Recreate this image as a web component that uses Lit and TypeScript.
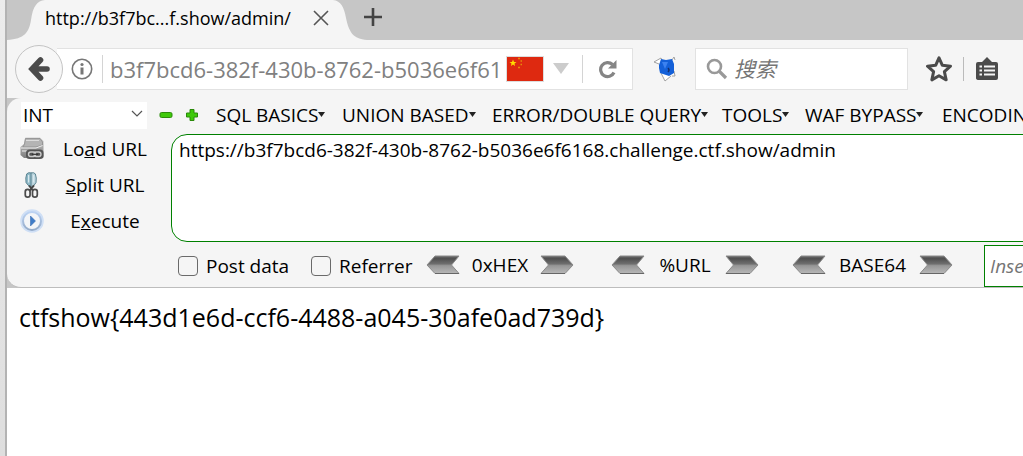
import { LitElement, html, css, svg } from "lit";
import { customElement } from "lit/decorators.js";

const MENUS = ["SQL BASICS", "UNION BASED", "ERROR/DOUBLE QUERY", "TOOLS", "WAF BYPASS", "ENCODING"];
const CODECS = ["0xHEX", "%URL", "BASE64"];

const starPoints = "12,1.8 15.1,8.6 22.6,9.4 17,14.5 18.6,22 12,18.2 5.4,22 7,14.5 1.4,9.4 8.9,8.6";

const diskIcon = html`<svg class="icon" viewBox="0 0 24 24" aria-hidden="true">
  <defs><linearGradient id="disk" x2="0" y2="1"><stop offset="0" stop-color="#d0d0d0" /><stop offset="1" stop-color="#7c7c7c" /></linearGradient></defs>
  <path d="M5 1 Q5 0.500 6 0.500 H20 L23.500 4 V20 Q23.500 21 22 21 H4 L0.500 18 V10 L4 7 Z" fill="url(#disk)" />
  <path d="M5.500 1.500 H20 L22.500 5 V8 L16 10 H3 L4.500 7 Z" fill="#b4b4b4" stroke="#8e8e8e" stroke-width=".8" />
  <path d="M6 3.500 H19" stroke="#dcdcdc" />
  <path d="M1 11 H16 L22.500 8.500 M2 14 H8" stroke="#efefef" fill="none" />
  <rect x="6" y="12.500" width="17.500" height="9.500" rx="3.500" fill="#555" />
  <rect x="8.500" y="15" width="7" height="4.500" rx="2.200" fill="none" stroke="#ccc" stroke-width="1.400" />
  <rect x="14" y="15" width="7" height="4.500" rx="2.200" fill="none" stroke="#ccc" stroke-width="1.400" />
  <path d="M12 17.300 H18" stroke="#333" stroke-width="1.200" />
</svg>`;

const scissorsIcon = html`<svg class="icon" viewBox="0 0 24 27" aria-hidden="true">
  <path d="M6.500 2 Q5 6 5.800 11 L10 16 H11.500 V1 Q8 0 6.500 2Z" fill="#8fb9c7" stroke="#56808e" />
  <path d="M15.500 2 Q17 6 16.200 11 L12.500 16 H11 V1 Q14 0 15.500 2Z" fill="#b9d3dc" stroke="#56808e" />
  <path d="M8.500 3 V11 M13.800 3 V11" stroke="#dcebf0" stroke-width="1.200" />
  <path d="M9 14 L13.500 20 M14 14 L9 20" stroke="#444" stroke-width="2" />
  <rect x="5" y="18" width="5" height="8" rx="2.500" fill="#f5f5f5" stroke="#4b4b4b" stroke-width="1.800" />
  <rect x="12.500" y="18" width="5" height="8" rx="2.500" fill="#f5f5f5" stroke="#4b4b4b" stroke-width="1.800" />
</svg>`;

const playIcon = html`<svg class="icon" viewBox="0 0 24 24" aria-hidden="true">
  <defs><linearGradient id="play" x2="0" y2="1"><stop offset="0" stop-color="#bcd3f3" /><stop offset="1" stop-color="#94abc9" /></linearGradient></defs>
  <circle cx="12" cy="12" r="11.800" fill="#cfdff5" />
  <circle cx="12" cy="12" r="9" fill="#f3f5f8" stroke="url(#play)" stroke-width="2" />
  <path d="M10.500 7 L15.500 12 L10.500 17Z" fill="#3f7cc8" stroke="#2d62a8" stroke-width=".5" />
</svg>`;

const arrowIcon = (dir: "left" | "right") => html`<svg class="arrow" viewBox="0 0 34 20" aria-hidden="true">
  <defs><linearGradient id="steel" x2="0" y2="1"><stop offset="0" stop-color="#6f6f6f" /><stop offset=".15" stop-color="#505050" /><stop offset=".45" stop-color="#6e6e6e" /><stop offset=".55" stop-color="#969696" /><stop offset="1" stop-color="#b8b8b8" /></linearGradient></defs>
  ${dir === "left"
    ? svg`<path d="M1 10 L9 1 H33 L25.500 10 L33 18.500 H9Z" fill="url(#steel)" stroke="#8a8a8a" /><path d="M9 18.500 H33" stroke="#666" />`
    : svg`<path d="M33 10 L25 1 H1 L8.500 10 L1 18.500 H25Z" fill="url(#steel)" stroke="#8a8a8a" /><path d="M1 18.500 H25" stroke="#666" />`}
</svg>`;

@customElement("app-root")
export class AppRoot extends LitElement {
  static styles = css`
    :host {
      display: block;
      font-family: "Open Sans", "Noto Sans CJK SC", sans-serif;
      font-size: 19px;
      line-height: 26px;
      color: #000;
    }
    * { box-sizing: border-box; }
    svg { display: block; flex: none; }
    button {
      font: inherit;
      color: inherit;
      background: none;
      border: 0;
      padding: 0;
      margin: 0;
      white-space: nowrap;
    }
    input, textarea, select { font: inherit; color: inherit; margin: 0; border-radius: 0; outline: 0; }
    .window {
      display: flex;
      flex-direction: column;
      min-height: 100vh;
      overflow: hidden;
      border-left: 2px solid #b3b3b3;
      margin-left: 5px;
      background: #fff;
    }
    .frame { background: linear-gradient(#ececec, #dedede); }
    .tabs { display: flex; height: 40px; background: #c6c6c6; color: #000; }
    .tab {
      display: flex;
      align-items: center;
      justify-content: space-between;
      width: 288px;
      padding: 0 4px 4px 0;
      background: #f5f5f5;
      font-size: 18px;
    }
    .tab-title { white-space: nowrap; }
    .new-tab { align-self: flex-start; margin: 8px 0 0 -3px; }
    .nav { display: flex; align-items: center; height: 58px; padding: 0 8px; background: #f5f5f5; }
    .back {
      z-index: 1;
      display: grid;
      place-items: center;
      flex: none;
      width: 48px;
      height: 48px;
      border: 1px solid #c4c4c4;
      border-radius: 50%;
      background: #f7f7f7;
    }
    .address {
      display: flex;
      align-items: center;
      flex: 575 1 0;
      min-width: 0;
      height: 42px;
      margin-left: -6px;
      padding-left: 14px;
      border: 1px solid #e2e2e2;
      border-left: 0;
      background: #fff;
    }
    .rule { flex: none; width: 1px; height: 28px; background: #d4d4d4; }
    .info { margin-right: 9px; }
    .url {
      flex: 1;
      min-width: 0;
      height: 30px;
      padding: 0;
      margin: 0 3px 0 7px;
      border: 0;
      background: none;
      color: #808080;
      font-size: 22px;
    }
    .flag { margin-right: 9px; }
    .drop { margin-right: 13px; }
    .reload { width: 49px; display: grid; place-items: center; }
    .addon { margin: 0 18px 0 20px; }
    .search {
      display: flex;
      align-items: center;
      gap: 6px;
      flex: 206 1 0;
      min-width: 0;
      height: 42px;
      padding-left: 10px;
      border: 1px solid #e2e2e2;
      background: #fff;
    }
    .search input { flex: 1; min-width: 0; padding: 0; border: 0; font-size: 21px; font-style: italic; }
    ::placeholder { color: #757575; opacity: 1; }
    .actions { display: flex; align-items: center; gap: 11px; padding: 0 16px 0 18px; }
    .actions .rule { height: 24px; background: #bbb; }
    .bar-back { background: #c6c6c6; }
    .bar {
      display: grid;
      grid-template-columns: 164px minmax(0, 1fr);
      height: 190px;
      border-bottom: 1px solid #bdbdbd;
      border-radius: 14px 0 0 14px;
      background: #f5f5f5;
    }
    .menus { grid-column: 1 / -1; display: flex; align-items: center; height: 36px; padding: 0 0 2px 14px; overflow: hidden; }
    .picker { position: relative; flex: none; width: 126px; margin-right: 12px; }
    .picker select { appearance: none; display: block; width: 100%; height: 27px; padding: 0 2px; border: 0; background: #fff; }
    .picker svg { position: absolute; right: 4px; top: 8px; pointer-events: none; }
    .sign { margin-right: 12px; }
    .sign-last { margin-right: 17px; }
    .menu-list { display: grid; grid-template-columns: 126px 150px 230px 83px 137px 120px; flex: none; }
    .menu { display: flex; align-items: center; }
    .side { display: flex; flex-direction: column; gap: 10px; padding: 2px 0 0 13px; }
    .action { display: grid; grid-template-columns: 24px 1fr; align-items: center; height: 26px; }
    .label { padding-right: 5px; text-align: center; }
    .icon { width: 24px; height: 26px; }
    .fields { min-width: 0; overflow: hidden; }
    .query {
      display: block;
      width: calc(100% + 20px);
      height: 108px;
      padding: 2px 7px;
      border: 1px solid #008000;
      border-radius: 16px;
      background: #fff;
      resize: none;
      overflow: hidden;
    }
    .options { display: flex; align-items: center; height: 47px; padding-left: 7px; }
    .check { display: flex; align-items: center; gap: 8px; flex: none; white-space: nowrap; }
    .check-post { width: 133px; }
    .check-ref { width: 115px; }
    .check input {
      appearance: none;
      width: 20px;
      height: 20px;
      border: 1px solid #6a6a6a;
      border-radius: 4px;
      background: #f5f5f5;
    }
    .codecs { display: grid; grid-template-columns: 185px 181px 192px; flex: none; padding-bottom: 2px; }
    .codec { display: flex; align-items: center; justify-self: start; }
    .codec-name { width: 80px; text-align: center; }
    .codec-name.long { width: 93px; }
    .arrow { width: 34px; height: 20px; }
    .replace { flex: none; width: 200px; height: 42px; padding: 0 5px; border: 1px solid #008000; background: #fff; font-style: italic; }
    .page { flex: 1; padding: 12px; font-size: 25px; line-height: 34px; }
  `;

  render() {
    return html`<div class="frame"><main class="window">
      <header class="tabs">
        <svg width="38" height="40" aria-hidden="true"><path d="M0 40 C18 39 22 32 24 20 C26 6 30 1 38 0 V40Z" fill="#f5f5f5" /></svg>
        <div class="tab">
          <span class="tab-title">http://b3f7bc...f.show/admin/</span>
          <button aria-label="Close tab"><svg width="16" height="16" aria-hidden="true"><path d="M1 1 L15 15 M15 1 L1 15" stroke="#555" stroke-width="1.600" /></svg></button>
        </div>
        <svg width="34" height="40" aria-hidden="true"><path d="M0 0 C8 1 11 7 13 18 C16 32 20 39 34 40 H0Z" fill="#f5f5f5" /></svg>
        <button class="new-tab" aria-label="New tab"><svg width="18" height="18" aria-hidden="true"><path d="M9 0 V18 M0 9 H18" stroke="#444" stroke-width="2.600" /></svg></button>
      </header>

      <nav class="nav">
        <button class="back" aria-label="Back"><svg width="22" height="24" viewBox="0 0 22 24" aria-hidden="true"><path d="M12.500 3 L4 12 L12.500 21 M5 12 H19" fill="none" stroke="#4b4b4b" stroke-width="5.600" stroke-linecap="round" stroke-linejoin="miter" /></svg></button>
        <div class="address">
          <svg class="info" width="22" height="22" viewBox="0 0 22 22" aria-hidden="true"><circle cx="11" cy="11" r="9.700" fill="none" stroke="#777" stroke-width="1.600" /><circle cx="11" cy="6.500" r="1.600" fill="#777" /><path d="M11 9.500 V16.500" stroke="#777" stroke-width="3" /></svg>
          <span class="rule"></span>
          <input class="url" aria-label="Address" value="b3f7bcd6-382f-430b-8762-b5036e6f61" />
          <svg class="flag" width="38" height="26" aria-hidden="true"><rect x=".5" y=".5" width="37" height="25" fill="#de2910" stroke="#ddd" /><path d="M7 3.500 L8 6 H10.500 L8.500 7.500 L9 10 L7 8.500 L5 10 L5.500 7.500 L3.500 6 H6Z" fill="#ffde00" /><path d="M12 2.500 h2 M14.500 5 h1.500 M14.500 8.500 h1.500 M12 11.500 h2" stroke="#e88b0a" stroke-width="1.600" /></svg>
          <svg class="drop" width="16" height="12" aria-hidden="true"><path d="M0 0 H16 L8 11Z" fill="#ccc" /></svg>
          <span class="rule"></span>
          <button class="reload" aria-label="Reload"><svg width="18" height="20" viewBox="0 0 18 20" aria-hidden="true"><path d="M13.500 5.500 A7 7 0 1 0 15 13.500" fill="none" stroke="#858585" stroke-width="3.200" /><path d="M17.500 1 V9.500 H9Z" fill="#858585" /></svg></button>
        </div>
        <button class="addon" aria-label="HackBar"><svg width="24" height="26" viewBox="0 0 24 26" aria-hidden="true"><path d="M6 8 L1 6 L8 2 L9 4 M19 4 L21 1 L22 4 M8 17 L12 25 L18 20 M21 15 L22 20 L19 20" fill="#fff" stroke="#999" stroke-width=".9" /><path d="M6 9 L8 3 L13 4 L19 3 L21 8 L21 17 L16 20 L7 17 L6 12Z" fill="#1460d8" /><path d="M9 6 L15 6 L12 13Z" fill="#3c82f0" /><path d="M15 12 q2 2 0 4" stroke="#14306e" stroke-width="1.500" fill="none" /></svg></button>
        <label class="search">
          <svg width="22" height="22" viewBox="0 0 22 22" aria-hidden="true"><circle cx="8.500" cy="8.500" r="6.500" fill="none" stroke="#999" stroke-width="2.600" /><path d="M13 13 L20 20" stroke="#999" stroke-width="3.200" /></svg>
          <input aria-label="搜索" placeholder="搜索" />
        </label>
        <div class="actions">
          <button aria-label="Bookmark"><svg width="26" height="26" viewBox="0 0 24 24" aria-hidden="true"><polygon points=${starPoints} fill="none" stroke="#4b4b4b" stroke-width="2.800" stroke-linejoin="round" /></svg></button>
          <span class="rule"></span>
          <button aria-label="Library"><svg width="24" height="24" viewBox="0 0 24 24" aria-hidden="true"><path d="M12 0 L17 5 H21 Q23 5 23 7 V21 Q23 23 21 23 H4 Q1 23 1 21 V7 Q1 5 3 5 H7Z" fill="#4b4b4b" /><path d="M4.500 9.500 H7 M4.500 13.500 H7 M4.500 17.500 H7 M9 9.500 H20 M9 13.500 H20 M9 17.500 H20" stroke="#f5f5f5" stroke-width="2.200" /></svg></button>
        </div>
      </nav>

      <section class="bar-back"><div class="bar">
        <div class="menus">
          <div class="picker">
            <select aria-label="Injection type"><option>INT</option></select>
            <svg width="12" height="8" aria-hidden="true"><path d="M1 1 L6 6 L11 1" fill="none" stroke="#555" stroke-width="1.200" /></svg>
          </div>
          <button class="sign" aria-label="Remove"><svg width="14" height="14" aria-hidden="true"><rect x="1" y="4.500" width="12" height="5" rx="1.500" fill="#3fc90a" stroke="#2b8a0a" /></svg></button>
          <button class="sign-last" aria-label="Add"><svg width="14" height="14" aria-hidden="true"><path d="M5 1.500 H9 V5 H12.500 V9 H9 V12.500 H5 V9 H1.500 V5 H5Z" fill="#3fc90a" stroke="#2b8a0a" stroke-linejoin="round" /></svg></button>
          <div class="menu-list">
            ${MENUS.map((m) => html`<button class="menu">${m}<svg width="7" height="6" aria-hidden="true"><path d="M0 0 H7 L3.500 5Z" fill="#222" /></svg></button>`)}
          </div>
        </div>
        <div class="side">
          <button class="action">${diskIcon}<span class="label">Lo<u>a</u>d URL</span></button>
          <button class="action">${scissorsIcon}<span class="label"><u>S</u>plit URL</span></button>
          <button class="action">${playIcon}<span class="label">E<u>x</u>ecute</span></button>
        </div>
        <div class="fields">
          <textarea class="query" aria-label="URL" spellcheck="false" .value=${"https://b3f7bcd6-382f-430b-8762-b5036e6f6168.challenge.ctf.show/admin"}></textarea>
          <div class="options">
            <label class="check check-post"><input type="checkbox" />Post data</label>
            <label class="check check-ref"><input type="checkbox" />Referrer</label>
            <div class="codecs">
              ${CODECS.map((c) => html`<div class="codec">
                <button aria-label="Decode ${c}">${arrowIcon("left")}</button>
                <span class="codec-name ${c.length > 5 ? "long" : ""}">${c}</span>
                <button aria-label="Encode ${c}">${arrowIcon("right")}</button>
              </div>`)}
            </div>
            <input class="replace" aria-label="Replacement" placeholder="Insert string to replace" />
          </div>
        </div>
      </div></section>

      <article class="page">ctfshow{443d1e6d-ccf6-4488-a045-30afe0ad739d}</article>
    </main></div>`;
  }
}
